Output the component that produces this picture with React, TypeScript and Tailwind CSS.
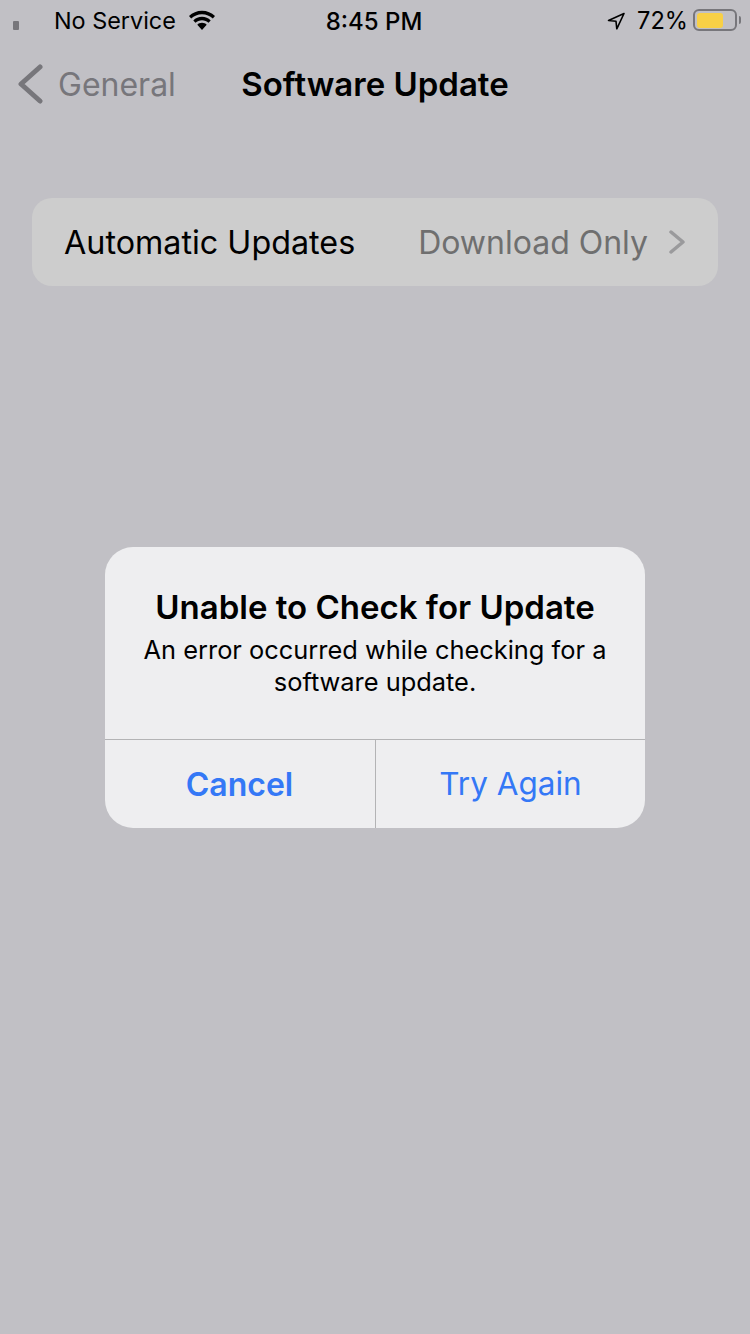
const StatusBar = () => (
  <div className="relative flex h-10 items-center text-[24px] leading-none text-black">
    <div className="ml-[13px] mt-[10px] h-[9px] w-[6px] rounded-[1px] bg-[#77767b]" />
    <span className="ml-[35px] mt-[2px] text-[23.4px]">No Service</span>
    <svg className="ml-[11px] mt-[1px]" width="30" height="22" viewBox="0 0 30 22" fill="#000">
      <path d="M15 4.2c4.2 0 8 1.6 10.8 4.3l2.2-2.4C24.6 2.8 20 .8 15 .8S5.4 2.8 2 6.1l2.2 2.4C7 5.800 10.800 4.200 15 4.200z" />
      <path d="M15 10.200c2.500 0 4.800 1 6.500 2.600l2.200-2.400C21.400 8.200 18.300 6.800 15 6.800s-6.400 1.400-8.700 3.600l2.200 2.400c1.700-1.600 4-2.600 6.500-2.600z" />
      <path d="M15 12.800c-1.900 0-3.500.7-4.700 1.900L15 20l4.700-5.300c-1.200-1.200-2.800-1.900-4.700-1.900z" />
    </svg>
    <span className="absolute left-0 right-[2px] top-[10px] text-center font-medium">8:45 PM</span>
    <div className="ml-auto mr-[9px] flex items-center">
      <svg className="mt-[2px]" width="20" height="20" viewBox="0 0 20 20" fill="none" stroke="#000" strokeWidth="1.600" strokeLinejoin="round">
        <path d="M18 2.500 2.500 9.500l7.500.8.800 7.500z" />
      </svg>
      <span className="ml-[11px] mt-[2px] text-[23.6px]">72%</span>
      <div className="ml-[5px] flex h-[22px] w-[44px] items-center rounded-[6px] border-2 border-[#77767b] p-[2px]">
        <div className="h-[15px] w-[26px] rounded-[3px] bg-[#f8d045]" />
      </div>
      <div className="ml-[2px] h-[8px] w-[2px] rounded-r-sm bg-[#77767b]" />
    </div>
  </div>
);

const NavBar = () => (
  <div className="relative flex h-[88px] items-center">
    <svg className="ml-[17px]" width="26" height="40" viewBox="0 0 26 40" fill="none" stroke="#77767b" strokeWidth="5" strokeLinecap="round" strokeLinejoin="round">
      <path d="M23 3 4 20l19 17" />
    </svg>
    <span className="ml-[15px] mt-[2px] text-[32px] leading-none text-[#77767b]">General</span>
    <span className="absolute left-0 right-0 top-[28px] text-center text-[33px] font-semibold leading-none text-black">Software Update</span>
  </div>
);

const AlertDialog = () => (
  <div className="absolute inset-0 flex items-start justify-center pt-[547px]">
    <div className="h-[281px] w-[540px] overflow-hidden rounded-[28px] bg-[#eeeef0] text-center">
      <div className="flex h-[192px] flex-col items-center">
        <h2 className="mt-[44px] text-[33px] font-semibold leading-none text-black">Unable to Check for Update</h2>
        <p className="mt-[10px] text-[25.4px] leading-[32px] text-black">
          An error occurred while checking for a
          <br />
          software update.
        </p>
      </div>
      <div className="flex h-[89px] border-t border-[#b3b3b5] leading-none text-[#3478f6]">
        <button className="flex w-[271px] items-center justify-center border-r border-[#b3b3b5] pr-[1px] pt-[1px] text-[32px] font-semibold">Cancel</button>
        <button className="flex flex-1 items-center justify-center text-[31.500px]">Try Again</button>
      </div>
    </div>
  </div>
);

const App = () => {
  return (
    <div className="relative h-[1334px] w-[750px] overflow-hidden bg-[#c1c0c5] font-['Inter',sans-serif]">
      <StatusBar />
      <NavBar />
      <div className="ml-8 mt-[70px] flex h-[88px] w-[686px] items-center rounded-[20px] bg-[#cdcdcd] pl-[32px] pr-[33px] text-[32px] leading-none">
        <span className="mt-[2px] text-[32.300px] text-black">Automatic Updates</span>
        <span className="ml-auto mt-[2px] text-[#6f6f6f]">Download Only</span>
        <svg className="ml-[21px]" width="16" height="24" viewBox="0 0 16 24" fill="none" stroke="#9a9a9c" strokeWidth="3.500" strokeLinecap="round" strokeLinejoin="round">
          <path d="m2 2 12 10L2 22" />
        </svg>
      </div>
      <AlertDialog />
    </div>
  );
};

export default App;
